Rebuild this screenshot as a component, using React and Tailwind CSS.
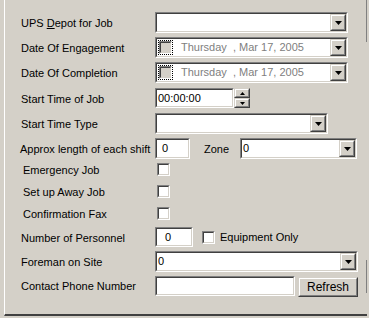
import React from "react";

const Sunken = ({ className = "", children, innerClass = "" }) => (
  <div className={"border border-t-[#808080] border-l-[#808080] border-b-white border-r-white " + className}>
    <div className={"h-full w-full border border-t-[#404040] border-l-[#404040] border-b-[#d4d0c8] border-r-[#d4d0c8] bg-white flex items-center " + innerClass}>
      {children}
    </div>
  </div>
);

const Raised = ({ className = "", children }) => (
  <div className={"border border-t-[#d4d0c8] border-l-[#d4d0c8] border-b-[#404040] border-r-[#404040] " + className}>
    <div className="h-full w-full border border-t-white border-l-white border-b-[#808080] border-r-[#808080] bg-[#d4d0c8] flex items-center justify-center">
      {children}
    </div>
  </div>
);

const Arrow = () => (
  <svg width="7" height="4" viewBox="0 0 7 4">
    <polygon points="0,0 7,0 3.5,4" fill="#000" />
  </svg>
);

const Combo = ({ className = "", value = "" }) => (
  <Sunken className={"h-[21px] " + className}>
    <div className="flex-1 pl-[1px] leading-none">{value}</div>
    <Raised className="w-[16px] h-full">
      <Arrow />
    </Raised>
  </Sunken>
);

const DatePick = () => (
  <Sunken className="h-[21px] w-[193px]">
    <div className="flex-1 flex items-center">
      <div className="ml-[1px] w-[15px] h-[15px] border border-dotted border-[#000] flex items-center justify-center">
        <div className="w-[13px] h-[13px] border border-t-[#808080] border-l-[#808080] border-b-white border-r-white">
          <div className="w-full h-full border border-t-[#404040] border-l-[#404040] border-b-[#d4d0c8] border-r-[#d4d0c8] bg-[#d4d0c8]" />
        </div>
      </div>
      <span className="ml-[8px] text-[#808080] whitespace-pre">Thursday  , Mar 17, 2005</span>
    </div>
    <Raised className="w-[16px] h-full">
      <Arrow />
    </Raised>
  </Sunken>
);

const Check = ({ className = "" }) => (
  <div className={"w-[13px] h-[13px] border border-t-[#808080] border-l-[#808080] border-b-white border-r-white " + className}>
    <div className="w-full h-full border border-t-[#404040] border-l-[#404040] border-b-[#d4d0c8] border-r-[#d4d0c8] bg-white" />
  </div>
);

const Label = ({ children, className = "" }) => (
  <div className={"w-[134px] shrink-0 pt-[2px] whitespace-nowrap " + className}>{children}</div>
);

export default function App() {
  return (
    <div
      className="w-[369px] h-[318px] bg-[#d4d0c8] overflow-hidden text-[11px] text-black"
      style={{ fontFamily: '"Liberation Sans", Arial, sans-serif' }}
    >
      <div className="ml-[4px] w-[363px] h-[316px] border-l border-l-white border-b-2 border-b-[#404040] flex">
        <div className="flex-1 flex flex-col pl-[16px]">
          <div className="mt-[12px] h-[21px] flex items-center">
            <Label>
              UPS <span className="underline">D</span>epot for Job
            </Label>
            <Combo className="w-[193px]" />
          </div>
          <div className="mt-[4px] h-[21px] flex items-center">
            <Label>Date Of Engagement</Label>
            <DatePick />
          </div>
          <div className="mt-[4px] h-[21px] flex items-center">
            <Label>Date Of Completion</Label>
            <DatePick />
          </div>
          <div className="mt-[5px] h-[20px] flex items-center">
            <Label>Start Time of Job</Label>
            <Sunken className="h-[20px] w-[79px]">
              <span className="pl-[1px]">00:00:00</span>
            </Sunken>
            <div className="w-[16px] h-[20px] flex flex-col">
              <Raised className="h-[10px] w-full">
                <svg width="5" height="3" viewBox="0 0 5 3"><polygon points="2.5,0 5,3 0,3" fill="#000" /></svg>
              </Raised>
              <Raised className="h-[10px] w-full">
                <svg width="5" height="3" viewBox="0 0 5 3"><polygon points="0,0 5,0 2.5,3" fill="#000" /></svg>
              </Raised>
            </div>
          </div>
          <div className="mt-[5px] h-[21px] flex items-center">
            <Label>Start Time Type</Label>
            <Combo className="w-[173px]" />
          </div>
          <div className="mt-[4px] h-[21px] flex items-center">
            <Label className="-ml-[1px]">Approx length of each shift</Label>
            <Sunken className="h-[21px] w-[35px] ml-[1px]">
              <span className="pl-[5px]">0</span>
            </Sunken>
            <span className="ml-[14px] pt-[1px]">Zone</span>
            <Combo className="w-[117px] ml-[11px]" value="0" />
          </div>
          <div className="mt-[4px] h-[13px] flex items-center">
            <Label className="pl-[2px]">Emergency Job</Label>
            <Check className="ml-[2px]" />
          </div>
          <div className="mt-[9px] h-[13px] flex items-center">
            <Label className="pl-[2px]">Set up Away Job</Label>
            <Check className="ml-[2px]" />
          </div>
          <div className="mt-[9px] h-[13px] flex items-center">
            <Label className="pl-[2px]">Confirmation Fax</Label>
            <Check className="ml-[2px]" />
          </div>
          <div className="mt-[7px] h-[20px] flex items-center">
            <Label>Number of Personnel</Label>
            <Sunken className="h-[20px] w-[38px]">
              <span className="pl-[8px]">0</span>
            </Sunken>
            <Check className="ml-[9px]" />
            <span className="ml-[5px] pt-[1px]">Equipment Only</span>
          </div>
          <div className="mt-[4px] h-[21px] flex items-center">
            <Label>Foreman on Site</Label>
            <Combo className="w-[203px]" value="0" />
          </div>
          <div className="mt-[3px] h-[21px] flex items-center">
            <Label>Contact Phone Number</Label>
            <Sunken className="h-[20px] w-[140px]" />
            <Raised className="ml-[3px] mt-[2px] h-[20px] w-[60px]">
              <span className="text-[12px]">Refresh</span>
            </Raised>
          </div>
        </div>
        <div className="w-[1px] flex flex-col">
          <div className="h-[42px] bg-[#808080]" />
          <div className="mt-[218px] h-[33px] bg-[#808080]" />
        </div>
      </div>
    </div>
  );
}
